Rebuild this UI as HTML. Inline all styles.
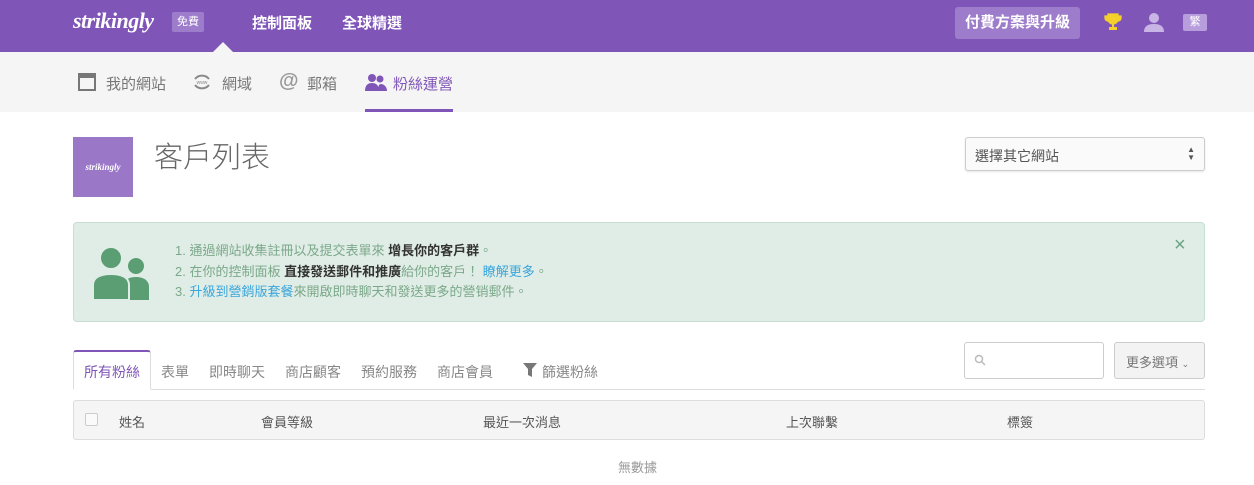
<!DOCTYPE html>
<html><head><meta charset="utf-8"><style>
*{margin:0;padding:0;box-sizing:border-box}
body{width:1254px;height:485px;overflow:hidden;background:#fff;font-family:"Liberation Sans","Noto Sans CJK TC",sans-serif;position:relative;color:#555}
.a{position:absolute}
.n{position:absolute;white-space:nowrap}
</style></head><body>
<div class="a" style="left:0;top:0;width:1254px;height:52px;background:#7f56b8"></div>
<div class="a" style="left:73px;top:8px;color:#fff;font:italic bold 22px 'Liberation Serif',serif;letter-spacing:-0.5px">strikingly</div>
<div class="a" style="left:172px;top:12px;width:32px;height:20px;background:#9c7ccb;border-radius:2px;color:#fff;font-size:11px;text-align:center;line-height:20px">免費</div>
<div class="a" style="left:252px;top:12px;color:#fff;font-size:15px;font-weight:bold">控制面板</div>
<div class="a" style="left:342px;top:12px;color:#fff;font-size:15px;font-weight:bold">全球精選</div>
<div class="a" style="left:213px;top:42px;width:0;height:0;border-left:10px solid transparent;border-right:10px solid transparent;border-bottom:10px solid #f5f5f5"></div>
<div class="a" style="left:955px;top:7px;width:125px;height:32px;background:#9c7ccb;border-radius:3px;color:#fff;font-size:15px;text-align:center;line-height:32px;font-weight:bold">付費方案與升級</div>
<svg class="a" style="left:1103px;top:12px" width="20" height="20" viewBox="0 0 20 20"><path d="M5 2h10v5a5 5 0 0 1-10 0z M5 4H2v2a3 3 0 0 0 3 3 M15 4h3v2a3 3 0 0 1-3 3" fill="#f5d02a" stroke="#f5d02a" stroke-width="1.3"/><rect x="9" y="11" width="2" height="4" fill="#f5d02a"/><rect x="6" y="15" width="8" height="3" fill="#f5d02a"/></svg>
<svg class="a" style="left:1143px;top:11px" width="22" height="22" viewBox="0 0 22 22"><circle cx="11" cy="7" r="5" fill="#c9b4e6"/><path d="M1 21c0-6 4-8 10-8s10 2 10 8z" fill="#c9b4e6"/></svg>
<div class="a" style="left:1183px;top:14px;width:24px;height:17px;background:#b79ddc;border-radius:2px;color:#fff;font-size:11px;text-align:center;line-height:17px">繁</div>

<div class="a" style="left:0;top:52px;width:1254px;height:60px;background:#f5f5f5"></div>
<svg class="a" style="left:78px;top:73px" width="18" height="18" viewBox="0 0 18 18"><rect x="1" y="1" width="16" height="16" fill="none" stroke="#777" stroke-width="2"/><rect x="1" y="1" width="16" height="4" fill="#777"/></svg>
<div class="a" style="left:106px;top:73px;font-size:15px;color:#777">我的網站</div>
<svg class="a" style="left:192px;top:73px" width="20" height="18" viewBox="0 0 20 18"><path d="M3 6a9 9 0 0 1 14 0M3 12a9 9 0 0 0 14 0" fill="none" stroke="#888" stroke-width="2"/><text x="10" y="11" font-size="5" text-anchor="middle" fill="#888">www</text></svg>
<div class="a" style="left:222px;top:73px;font-size:15px;color:#777">網域</div>
<div class="a" style="left:279px;top:70px;font-size:20px;color:#999;font-weight:bold">@</div>
<div class="a" style="left:307px;top:73px;font-size:15px;color:#777">郵箱</div>
<svg class="a" style="left:365px;top:73px" width="22" height="18" viewBox="0 0 22 18"><circle cx="7" cy="5" r="4" fill="#7f56b8"/><path d="M0 18c0-6 3-8 7-8s7 2 7 8z" fill="#7f56b8"/><circle cx="15" cy="6" r="3.5" fill="#7f56b8"/><path d="M13 18c0-5 1-7 3-7s6 2 6 7z" fill="#7f56b8"/></svg>
<div class="a" style="left:393px;top:73px;font-size:15px;color:#7f56b8">粉絲運營</div>
<div class="a" style="left:365px;top:109px;width:88px;height:3px;background:#7f56b8"></div>

<div class="a" style="left:73px;top:137px;width:60px;height:60px;background:#9b77c8;color:#fff;font:italic bold 9px 'Liberation Serif',serif;text-align:center;line-height:60px">strikingly</div>
<div class="a" style="left:154px;top:134px;font-size:29px;color:#666;font-weight:300">客戶列表</div>
<div class="a" style="left:965px;top:137px;width:240px;height:34px;border:1px solid #ccc;border-radius:3px;background:#fafafa;box-shadow:0 1px 2px rgba(0,0,0,.1);font-size:14px;color:#555;padding:8px 0 0 9px">選擇其它網站<span style="position:absolute;right:9px;top:8px;font-size:8px;line-height:8px;color:#555">▲<br>▼</span></div>

<div class="a" style="left:73px;top:222px;width:1132px;height:100px;background:#e0ede6;border:1px solid #c6dfd0;border-radius:4px"></div>
<svg class="a" style="left:93px;top:243px" width="64" height="57" viewBox="0 0 64 57">
<circle cx="43" cy="23" r="8" fill="#5b9e74"/>
<path d="M30 57V44c0-7 6-10 13-10s13 3 13 10v13z" fill="#5b9e74"/>
<path d="M26 57V45c0-7-4-10-4-10l-4 0 0 0" fill="none" stroke="#e0ede6" stroke-width="3"/>
<circle cx="18" cy="15" r="11" fill="#5b9e74" stroke="#e0ede6" stroke-width="2"/>
<path d="M0 57V42c0-8 8-11 18-11s18 3 18 11v15z" fill="#5b9e74" stroke="#e0ede6" stroke-width="2"/>
</svg>
<div class="a" style="left:175px;top:241px;font-size:13px;line-height:20.5px;color:#7ba88a">
<div>1. 通過網站收集註冊以及提交表單來 <b style="color:#333">增長你的客戶群</b>。</div>
<div>2. 在你的控制面板 <b style="color:#333">直接發送郵件和推廣</b>給你的客戶！ <span style="color:#3ba6dc">瞭解更多</span>。</div>
<div>3. <span style="color:#3ba6dc">升級到營銷版套餐</span>來開啟即時聊天和發送更多的營销郵件。</div>
</div>
<div class="a" style="left:1174px;top:234px;font-size:20px;color:#6aa383">×</div>

<div class="a" style="left:73px;top:389px;width:1132px;height:1px;background:#ddd"></div>
<div class="a" style="left:73px;top:350px;width:78px;height:40px;border:1px solid #ddd;border-top:2px solid #7f56b8;border-bottom:1px solid #fff;background:#fff;border-radius:3px 3px 0 0"></div>
<div class="a" style="left:84px;top:362px;font-size:14px;color:#7f56b8">所有粉絲</div>
<div class="a" style="left:161px;top:362px;font-size:14px;color:#888"><span class="n" style="left:0">表單</span><span class="n" style="left:48px">即時聊天</span><span class="n" style="left:124px">商店顧客</span><span class="n" style="left:200px">預約服務</span><span class="n" style="left:276px">商店會員</span></div>
<svg class="a" style="left:523px;top:363px" width="14" height="14" viewBox="0 0 14 14"><path d="M0 0h14L9 6v8L5 12V6z" fill="#777"/></svg>
<div class="a" style="left:542px;top:362px;font-size:14px;color:#888">篩選粉絲</div>
<div class="a" style="left:964px;top:342px;width:140px;height:37px;border:1px solid #ccc;border-radius:3px;background:#fff"></div>
<svg class="a" style="left:974px;top:354px" width="12" height="12" viewBox="0 0 12 12"><circle cx="5" cy="5" r="3.5" fill="none" stroke="#bbb" stroke-width="1.5"/><path d="M7.5 7.5L11 11" stroke="#bbb" stroke-width="1.5"/></svg>
<div class="a" style="left:1114px;top:342px;width:91px;height:37px;border:1px solid #ccc;border-radius:3px;background:#f3f3f3;font-size:13px;color:#777;padding:9px 0 0 11px">更多選項 <span style="font-size:9px">⌄</span></div>

<div class="a" style="left:73px;top:400px;width:1132px;height:40px;border:1px solid #ddd;border-radius:3px;background:#f5f5f5"></div>
<div class="a" style="left:85px;top:413px;width:13px;height:13px;border:1px solid #ccc;border-radius:2px;background:#fafafa"></div>
<div class="a" style="top:412px;font-size:13px;color:#555;left:0;width:1254px">
<span class="n" style="left:119px">姓名</span><span class="n" style="left:261px">會員等級</span><span class="n" style="left:483px">最近一次消息</span><span class="n" style="left:786px">上次聯繫</span><span class="n" style="left:1007px">標簽</span></div>
<div class="a" style="left:618px;top:457px;font-size:13px;color:#999">無數據</div>
</body></html>
